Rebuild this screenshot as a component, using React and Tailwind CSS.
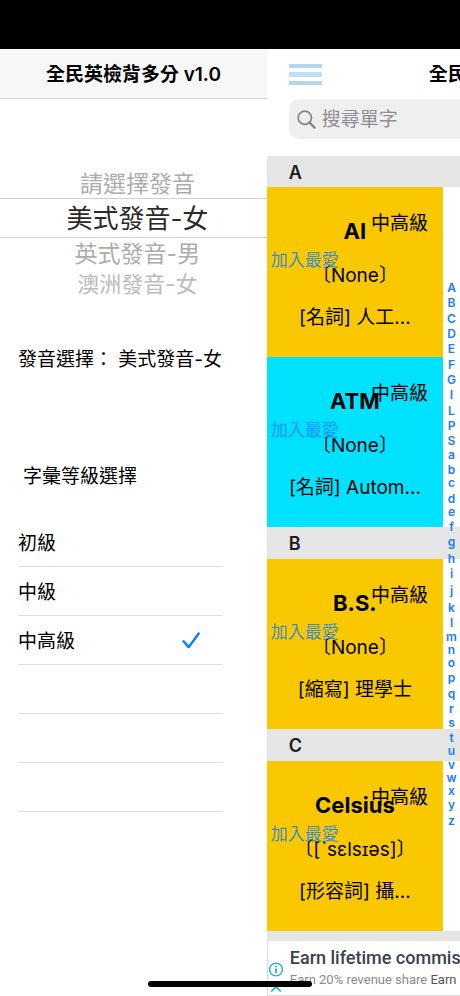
import { useState } from 'react';

const PICKER = ['請選擇發音', '美式發音-女', '英式發音-男', '澳洲發音-女'];

const LEVELS = ['初級', '中級', '中高級'];

const SECTIONS = [
  {
    letter: 'A',
    words: [
      { word: 'AI', level: '中高級', kk: '〔None〕', meaning: '[名詞] 人工…', color: 'bg-[#f9c800]' },
      { word: 'ATM', level: '中高級', kk: '〔None〕', meaning: '[名詞] Autom…', color: 'bg-[#00e2ff]' },
    ],
  },
  {
    letter: 'B',
    words: [{ word: 'B.S.', level: '中高級', kk: '〔None〕', meaning: '[縮寫] 理學士', color: 'bg-[#f9c800]' }],
  },
  {
    letter: 'C',
    words: [{ word: 'Celsius', level: '中高級', kk: '〔[ˋsɛlsɪəs]〕', meaning: '[形容詞] 攝…', color: 'bg-[#f9c800]' }],
  },
];

const INDEX = 'ABCDEFGILPSabcdefghijklmnopqrstuvwxyz'.split('');

const indexHeight = (ch) => {
  if (ch === 'j') return 'h-[18px] pb-[2px]';
  if ('gpqy'.includes(ch)) return 'h-[16px] pb-[2px]';
  if ('acemnorsuvwxz'.includes(ch)) return 'h-[13px]';
  return 'h-[15px]';
};

function VoicePicker({ value, onChange }) {
  const rowClass = (voice, i) => {
    if (voice === value) return 'h-10 border-y border-[#cfcfcf] text-[26px] text-[#2a2a2a]';
    if (i === 3) return 'h-[30px] text-[22px] text-[#bcbcbc]';
    return 'h-[30px] text-[23px] text-[#acacac]';
  };

  return (
    <div className="flex flex-col pt-[69px] pb-[18px]">
      {PICKER.map((voice, i) => (
        <button
          key={voice}
          type="button"
          onClick={() => onChange(voice)}
          className={`flex w-full items-center justify-center pt-[2px] pl-2 leading-none ${rowClass(voice, i)}`}
        >
          {voice}
        </button>
      ))}
    </div>
  );
}

function LevelList() {
  const [selected, setSelected] = useState('中高級');

  return (
    <div className="mr-11 ml-[18px]">
      {LEVELS.map((level) => (
        <button
          key={level}
          type="button"
          aria-pressed={selected === level}
          onClick={() => setSelected(level)}
          className="flex h-[49px] w-full items-center justify-between border-b border-[#dedede] pt-[2px] pr-[22px] text-left"
        >
          {level}
          {selected === level && (
            <svg viewBox="0 0 19 18" className="h-[18px] w-[19px]" fill="none" stroke="#0a7aff" strokeWidth="2.4" strokeLinecap="round" strokeLinejoin="round">
              <path d="M1.5 9.3 6.7 15.1 16.7 1.5" />
            </svg>
          )}
        </button>
      ))}
      <div className="h-[49px] border-b border-[#dedede]" />
      <div className="h-[49px] border-b border-[#dedede]" />
      <div className="h-[49px] border-b border-[#dedede]" />
    </div>
  );
}

function WordCard({ item }) {
  return (
    <article className={`relative mr-[17px] flex h-[170px] flex-col items-center pt-7 whitespace-nowrap ${item.color}`}>
      <h3 className="text-[22px] leading-8 font-bold">{item.word}</h3>
      <p className="mt-[13px] leading-8">{item.kk}</p>
      <p className="mt-[10px] leading-8">{item.meaning}</p>
      <span className="absolute top-[21px] right-[15px] leading-8">{item.level}</span>
      <button type="button" className="absolute top-[57px] left-1 text-[17px] leading-8 text-[#007aff]/75">
        加入最愛
      </button>
    </article>
  );
}

function AdBanner() {
  return (
    <a
      href="#ad"
      className="flex h-[55px] shrink-0 overflow-hidden border-b border-l border-[#dcdcdc] bg-white font-[Roboto,sans-serif] whitespace-nowrap"
    >
      <span className="flex w-[22px] shrink-0 flex-col pt-5">
        <svg viewBox="0 0 16 34" className="h-[34px] w-4" fill="none" stroke="#1bb0d0" strokeWidth="1.4">
          <circle cx="8" cy="8.5" r="6.4" />
          <path d="M8 7.5v4.6M8 4.7v1.6" strokeWidth="1.8" />
          <path d="M3.2 30.5 8 25.8l4.8 4.7" strokeWidth="1.7" />
        </svg>
      </span>
      <span className="flex flex-col pt-[5px]">
        <span className="text-[18px] leading-6 font-medium text-[#37434d]">Earn lifetime commissions</span>
        <span className="text-[13px] leading-5 text-[#8a8a8a]">
          Earn 20% revenue share <span className="text-[#555]">Earn 10%</span>
        </span>
      </span>
    </a>
  );
}

export default function App() {
  const [voice, setVoice] = useState('美式發音-女');

  return (
    <div className="relative flex h-screen flex-col overflow-hidden bg-white font-[Inter,'Noto_Sans_CJK_TC',sans-serif] text-[19px] leading-none text-black">
      <div className="h-[49px] shrink-0 bg-black" />

      <div className="flex min-h-0 flex-1">
        <aside className="w-[58%] shrink-0">
          <header className="flex h-[50px] items-center justify-center border-b border-[#d4d4d4] bg-[#f7f7f7] pt-[2px]">
            <h1 className="text-[19px] font-semibold">全民英檢背多分 v1.0</h1>
          </header>
          <VoicePicker value={voice} onChange={setVoice} />
          <p className="mt-7 ml-[18px] leading-8 whitespace-nowrap">發音選擇： {voice}</p>
          <h2 className="mt-[85px] mb-[25px] ml-[23px] leading-8">字彙等級選擇</h2>
          <LevelList />
        </aside>

        <main className="relative flex min-w-0 flex-1 flex-col overflow-hidden">
          <header className="flex h-[50px] shrink-0 items-center pl-[22px] whitespace-nowrap">
            <button type="button" aria-label="選單" className="flex shrink-0 flex-col gap-1">
              <span className="h-[4px] w-[33px] bg-[#b3d5ee]" />
              <span className="h-[5px] w-[33px] bg-[#bde0f7]" />
              <span className="h-[4px] w-[33px] bg-[#b3d5ee]" />
            </button>
            <h1 className="ml-[107px] text-[19px] font-semibold">全民英檢背多分 v1.0</h1>
          </header>

          <label className="-mr-10 ml-[22px] flex h-10 shrink-0 items-center gap-[6px] rounded-[10px] bg-[#efefef] pl-2">
            <svg viewBox="0 0 19 19" className="h-[19px] w-[19px] shrink-0" fill="none" stroke="#858589" strokeWidth="1.7" strokeLinecap="round">
              <circle cx="7.8" cy="7.8" r="6.6" />
              <path d="m12.6 12.6 5 5" strokeWidth="2.2" />
            </svg>
            <input
              type="search"
              aria-label="搜尋單字"
              placeholder="搜尋單字"
              className="w-full min-w-0 bg-transparent outline-none placeholder:text-[#8e8e93]"
            />
          </label>

          <div className="mt-[17px] flex min-h-0 flex-1 flex-col overflow-hidden">
            {SECTIONS.map((section) => (
              <section key={section.letter} className="group shrink-0">
                <h2 className="flex h-8 items-center bg-[#e5e5e5] pt-[2px] pl-[22px] text-[18px] font-semibold text-[#1c1c1c] group-first:h-[31px]">
                  {section.letter}
                </h2>
                {section.words.map((item) => (
                  <WordCard key={item.word} item={item} />
                ))}
              </section>
            ))}
            <div className="flex-1 bg-[#e5e5e5]" />
          </div>

          <AdBanner />

          <nav className="absolute top-[230px] right-0 flex h-[548px] w-[17px] flex-col justify-between text-[12px] font-semibold text-[#147efb]">
            {INDEX.map((ch) => (
              <a key={ch} href={`#${ch}`} className={`flex items-end justify-center leading-none ${indexHeight(ch)}`}>
                {ch}
              </a>
            ))}
          </nav>
        </main>
      </div>

      <div className="absolute bottom-[9px] left-1/2 h-[6px] w-[164px] -translate-x-1/2 rounded-full bg-black" />
    </div>
  );
}
